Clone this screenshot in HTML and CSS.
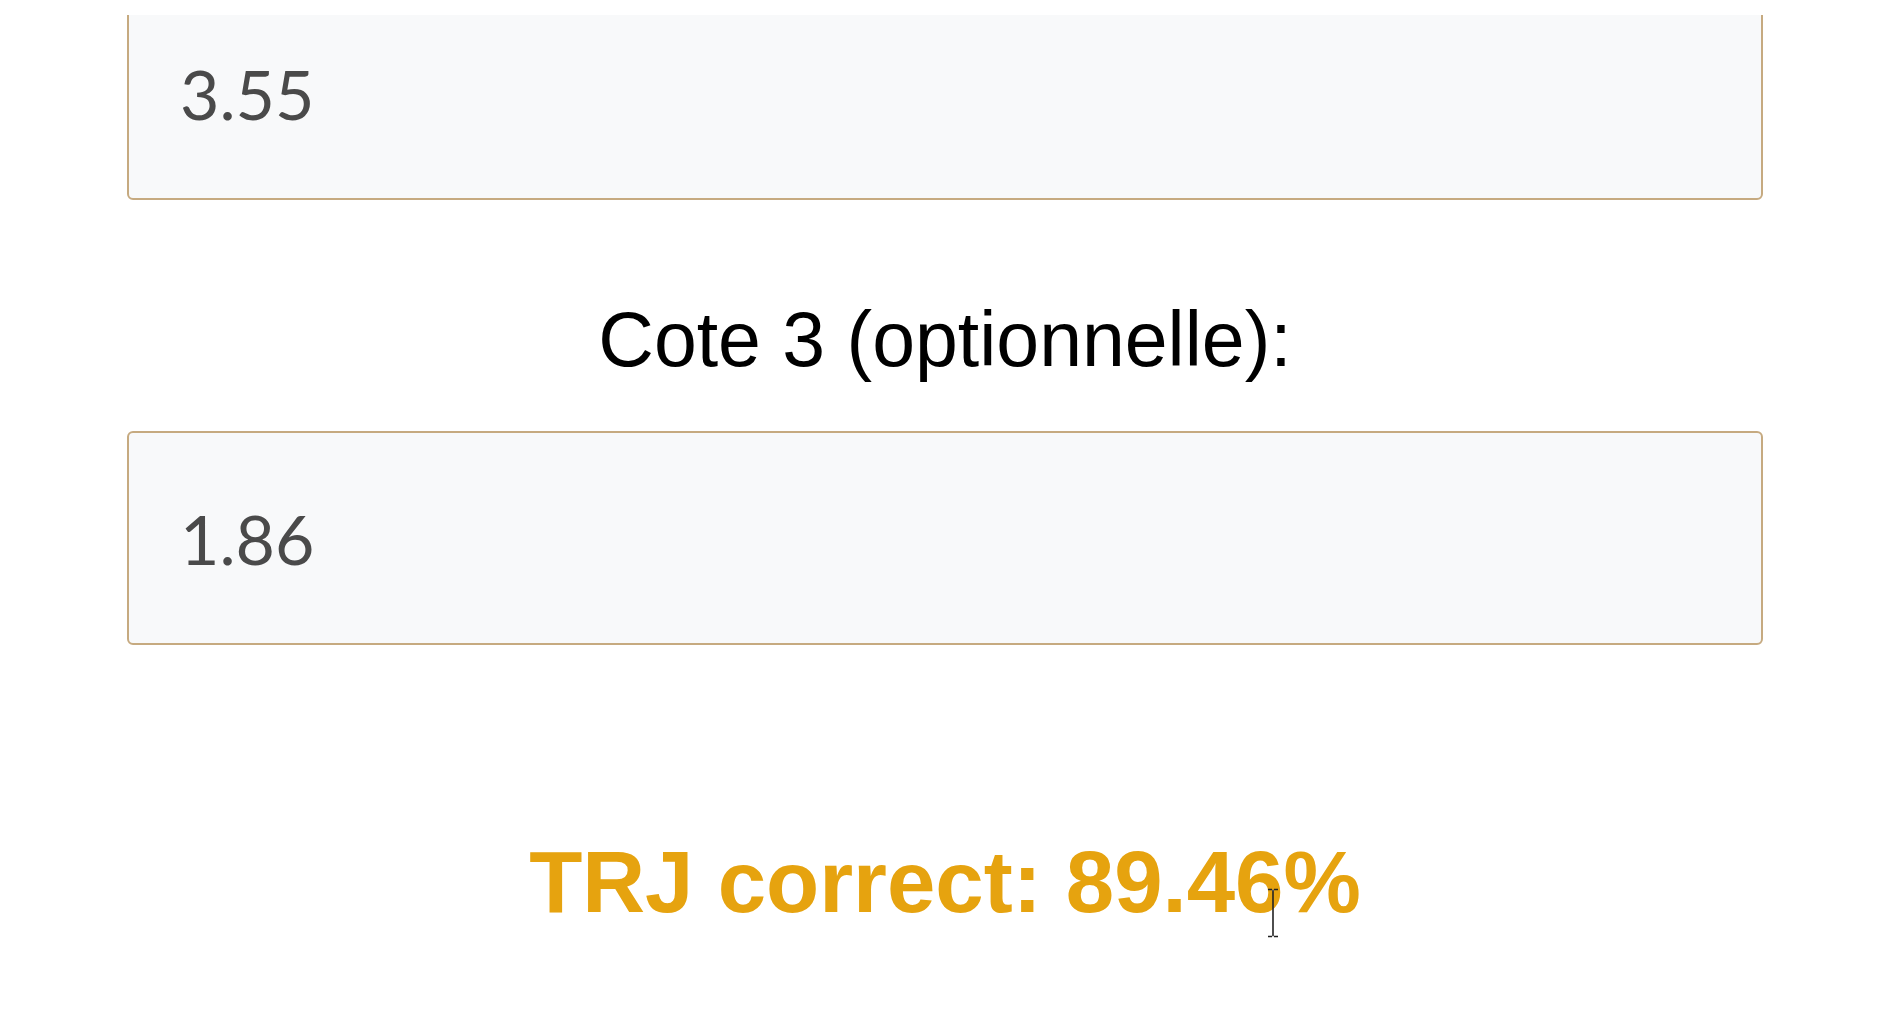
FILE: index.html
```html
<!DOCTYPE html>
<html lang="fr">
<head>
<meta charset="utf-8">
<title>TRJ</title>
<link rel="stylesheet" href="styles.css">
</head>
<body>
<div class="topmask"></div>
<main class="form">
  <input class="odds first" type="text" value="3.55" readonly>
  <label class="label" for="cote3">Cote 3 (optionnelle):</label>
  <input class="odds" id="cote3" type="text" value="1.86" readonly>
  <p class="result">TRJ correct: 89.46%</p>
</main>
<svg class="cursor" width="16" height="50" viewBox="0 0 16 50">
  <path d="M3 1.5h4M9 1.5h4M8 2v46M3 48.5h4M9 48.5h4" stroke="#222" stroke-width="1.6" fill="none"/>
  <path d="M7 2.5h2M7 47.5h2" stroke="#555" stroke-width="1.4"/>
</svg>
</body>
</html>
```
FILE: styles.css
```css
html, body {
  margin: 0;
  padding: 0;
  background: #ffffff;
  overflow: hidden;
}

body {
  width: 1902px;
  height: 1023px;
  position: relative;
}

.topmask {
  position: fixed;
  top: 0;
  left: 0;
  right: 0;
  height: 15px;
  background: #ffffff;
  z-index: 5;
}

.form {
  display: flex;
  flex-direction: column;
  box-sizing: border-box;
  width: 1763px;
  padding-left: 127px;
}

.odds {
  display: block;
  box-sizing: border-box;
  width: 100%;
  height: 214px;
  margin: 0;
  padding: 0 0 0 51px;
  border: 2px solid #c6aa80;
  border-radius: 6px;
  background: #f8f9fa;
  font-family: Lato, "Noto Sans", sans-serif;
  font-size: 68px;
  font-weight: 400;
  color: #4a4a4a;
  outline: none;
}

.odds.first {
  margin-top: -14px;
}

.label {
  display: block;
  margin-top: 94px;
  height: 90px;
  line-height: 90px;
  text-align: center;
  font-family: "Liberation Sans", Arial, sans-serif;
  font-size: 77px;
  color: #000000;
}

.label + .odds {
  margin-top: 47px;
}

.result {
  margin: 187px 0 0;
  line-height: 100px;
  text-align: center;
  font-family: "Liberation Sans", Arial, sans-serif;
  font-weight: 700;
  font-size: 87px;
  color: #e6a30f;
}

.cursor {
  position: absolute;
  left: 1265px;
  top: 888px;
  z-index: 6;
}
```
